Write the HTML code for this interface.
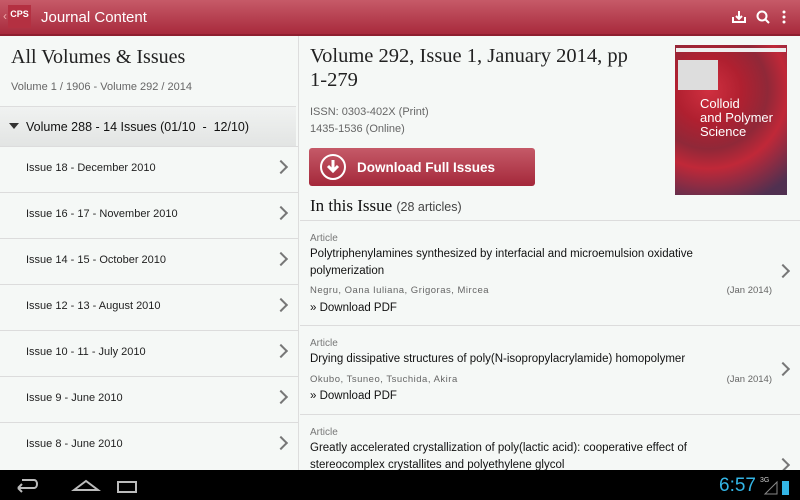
<html><head><style>
body{margin:0;width:800px;height:500px;overflow:hidden;background:#f5f8f6;font-family:"Liberation Sans",sans-serif;position:relative}
.a{position:absolute}
.hdr{left:0;top:0;width:800px;height:34px;background:linear-gradient(#c65a68,#a82a3c);border-bottom:2px solid #8e1f2f}
.serif{font-family:"Liberation Serif",serif}
.row{position:absolute;left:0;width:298px;height:46px;border-top:1px solid #dcdcdc;font-size:11px;color:#222}
.row span{position:absolute;left:26px;top:15px}
.chev{position:absolute;right:12px;top:15px;width:8px;height:8px;border-right:2px solid #777;border-top:2px solid #777;transform:rotate(45deg)}
.art{position:absolute;left:300px;width:500px;border-top:1px solid #dcdcdc}
.art .k{position:absolute;left:10px;font-size:10px;color:#777}
.art .t{position:absolute;left:10px;font-size:11.5px;color:#111;line-height:17px;width:430px}
.art .au{position:absolute;left:10px;font-size:9.5px;color:#666;letter-spacing:.5px}
.art .d{position:absolute;right:28px;font-size:9.5px;color:#666}
.art .p{position:absolute;left:10px;font-size:11.5px;color:#111}
</style></head><body>
<div class="a hdr"></div>
<div class="a" style="left:3px;top:9px;color:#eaa;font-size:12px">‹</div>
<div class="a" style="left:8px;top:5px;width:23px;height:23px;background:#b43041;color:#fff;font-size:9px;font-weight:bold;text-align:center;line-height:18px">CPS</div>
<div class="a" style="left:41px;top:9px;color:#fff;font-size:15px">Journal Content</div>
<svg class="a" style="left:730px;top:9px" width="60" height="16"><path d="M3 8v5h12V8M9 2v8M6 7l3 3 3-3" stroke="#fff" stroke-width="2" fill="none"/><circle cx="32" cy="7" r="4.5" stroke="#fff" stroke-width="2" fill="none"/><path d="M35 10l4 4" stroke="#fff" stroke-width="2"/><circle cx="54" cy="3" r="1.5" fill="#fff"/><circle cx="54" cy="8" r="1.5" fill="#fff"/><circle cx="54" cy="13" r="1.5" fill="#fff"/></svg>
<div class="a" style="left:298px;top:36px;width:1px;height:434px;background:#ddd"></div>
<div class="a serif" style="left:11px;top:46px;font-size:20px;color:#222">All Volumes &amp; Issues</div>
<div class="a" style="left:11px;top:81px;font-size:11px;color:#666">Volume 1 / 1906 - Volume 292 / 2014</div>
<div class="a" style="left:0;top:106px;width:296px;height:40px;background:linear-gradient(#f0f2f1,#e2e4e3);border-top:1px solid #ddd"></div>
<div class="a" style="left:9px;top:123px;border:5px solid transparent;border-top:6px solid #333;width:0;height:0"></div>
<div class="a" style="left:26px;top:120px;font-size:12.5px;color:#111">Volume 288 - 14 Issues (01/10 &nbsp;- &nbsp;12/10)</div>
<div class="row" style="top:146px"><span>Issue 18 - December 2010</span><i class="chev"></i></div>
<div class="row" style="top:192px"><span>Issue 16 - 17 - November 2010</span><i class="chev"></i></div>
<div class="row" style="top:238px"><span>Issue 14 - 15 - October 2010</span><i class="chev"></i></div>
<div class="row" style="top:284px"><span>Issue 12 - 13 - August 2010</span><i class="chev"></i></div>
<div class="row" style="top:330px"><span>Issue 10 - 11 - July 2010</span><i class="chev"></i></div>
<div class="row" style="top:376px"><span>Issue 9 - June 2010</span><i class="chev"></i></div>
<div class="row" style="top:422px"><span>Issue 8 - June 2010</span><i class="chev"></i></div>
<div class="a serif" style="left:310px;top:44px;font-size:20.5px;line-height:24px;color:#222;width:330px">Volume 292, Issue 1, January 2014, pp 1-279</div>
<div class="a" style="left:310px;top:104px;font-size:11px;line-height:17px;color:#666">ISSN: 0303-402X (Print)<br>1435-1536 (Online)</div>
<div class="a" style="left:309px;top:148px;width:226px;height:38px;border-radius:3px;background:linear-gradient(#c55a68,#a4283a)"></div>
<div class="a" style="left:320px;top:154px;width:22px;height:22px;border:2px solid #fff;border-radius:50%"></div>
<svg class="a" style="left:324px;top:158px" width="18" height="18"><path d="M9 2v10M4 8l5 5 5-5" stroke="#fff" stroke-width="3" fill="none"/></svg>
<div class="a" style="left:357px;top:160px;font-size:13.5px;font-weight:bold;color:#fff">Download Full Issues</div>
<div class="a" style="left:675px;top:45px;width:112px;height:150px;background:radial-gradient(circle at 30% 30%,#d03040,#b02030 25%,#902838 45%,#c02838 60%,#503050 90%)"></div>
<div class="a" style="left:676px;top:48px;width:110px;height:4px;background:#eee"></div>
<div class="a" style="left:678px;top:60px;width:40px;height:30px;background:#ddd"></div>
<div class="a" style="left:700px;top:97px;font-size:13px;line-height:14px;color:#fff">Colloid<br>and Polymer<br>Science</div>
<div class="a" style="left:310px;top:196px;font-size:15px;color:#111"><span class="serif" style="font-size:17px">In this Issue</span> <span style="font-size:12.5px;color:#444">(28 articles)</span></div>
<div class="art" style="top:220px;height:104px"><div class="k" style="top:12px">Article</div><div class="t" style="top:25px">Polytriphenylamines synthesized by interfacial and microemulsion oxidative polymerization</div><div class="au" style="top:64px">Negru, Oana Iuliana, Grigoras, Mircea</div><div class="d" style="top:64px">(Jan 2014)</div><div class="p" style="top:81px">» Download PDF</div><i class="chev" style="top:45px;right:12px"></i></div>
<div class="art" style="top:325px;height:89px"><div class="k" style="top:12px">Article</div><div class="t" style="top:25px">Drying dissipative structures of poly(N-isopropylacrylamide) homopolymer</div><div class="au" style="top:48px">Okubo, Tsuneo, Tsuchida, Akira</div><div class="d" style="top:48px">(Jan 2014)</div><div class="p" style="top:64px">» Download PDF</div><i class="chev" style="top:38px;right:12px"></i></div>
<div class="art" style="top:414px;height:56px"><div class="k" style="top:12px">Article</div><div class="t" style="top:25px">Greatly accelerated crystallization of poly(lactic acid): cooperative effect of stereocomplex crystallites and polyethylene glycol</div><i class="chev" style="top:45px;right:12px"></i></div>
<div class="a" style="left:0;top:470px;width:800px;height:30px;background:#000"></div>
<svg class="a" style="left:10px;top:474px" width="160" height="22"><path d="M8 14h16c4 0 4-8 0-8H12M8 14l4-4M8 14l4 4" stroke="#bbb" stroke-width="2" fill="none"/><path d="M64 16l12-9 12 9z" stroke="#bbb" stroke-width="2" fill="none"/><rect x="108" y="8" width="18" height="10" stroke="#bbb" stroke-width="2" fill="none"/></svg>
<div class="a" style="left:719px;top:475px;font-size:19px;color:#33b5e5">6:57</div>
<div class="a" style="left:760px;top:477px;font-size:7px;color:#ccc">3G</div>
<svg class="a" style="left:763px;top:478px" width="30" height="18"><path d="M2 16L14 4v12z" stroke="#888" fill="none"/><rect x="19" y="3" width="7" height="14" fill="#33b5e5"/></svg>
</body></html>
